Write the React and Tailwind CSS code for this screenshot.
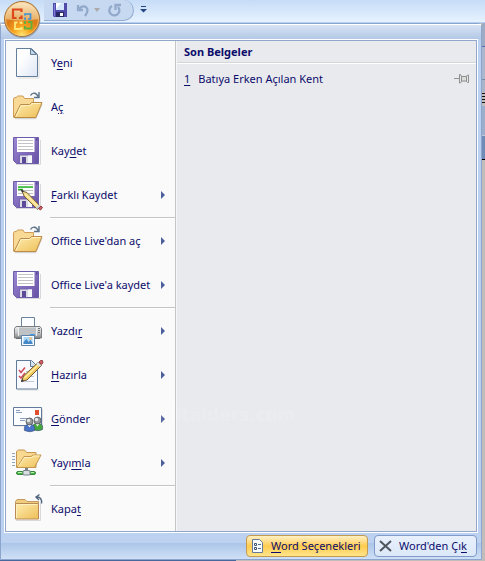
import React from "react";

function Folder({ mode }) {
  return (
    <svg width="32" height="32" viewBox="0 0 32 32" fill="none">
      <defs>
        <linearGradient id="fy" x1="0" y1="0" x2="1" y2="1">
          <stop offset="0" stopColor="#ffedb0" />
          <stop offset="1" stopColor="#edbf58" />
        </linearGradient>
      </defs>
      {mode === "closed" ? (
        <>
          <path d="M4 27.500h24.500V10" stroke="#d9d9dc" />
          <path d="M3.500 25.500V8.500l1.500-2h8l2 2h11.500v17z" fill="#f0cd7c" stroke="#c29a62" />
          <path d="M3.500 26V10.500h23V26z" fill="url(#fy)" stroke="#b98a56" />
          <path d="M4.500 25V11.500h21" stroke="#fff0c0" />
          <path d="M29.500 10.500c.5-4-1-6.500-4.500-6.500M27.500 1.500L24 4l3 3" stroke="#52657f" strokeWidth="1.400" />
        </>
      ) : (
        <>
          <path d="M3 27.500h20.500L30 13" stroke="#d5d5d8" strokeWidth="1.500" />
          <path d="M1.500 26V8l1-1.500h2l1-1.500h5.500l1.500 2.500h9v6L22 26z" fill="#f8d996" stroke="#cf9d56" />
          <path d="M2 26.500L8.500 13.500l9 0 2-2H30L24 26.500z" fill="url(#fy)" stroke="#bd8b45" />
          <path d="M4 25.500L9.200 14.500H18l2-2h8.500" stroke="#fff1c2" />
          <path d="M18.500 4.500c2-3.500 6-3 7.500 1M27 1v5.500h-5" stroke="#5a7287" strokeWidth="1.400" />
        </>
      )}
    </svg>
  );
}

function Pencil() {
  return (
    <g>
      <path d="M10 12l2 5L25.500 30.500l3-3L15 13.500z" fill="#f3d586" stroke="#74613c" />
      <path d="M13 15L27 28.500" stroke="#fff0a9" strokeWidth="1.500" />
      <path d="M24.500 29.500l3.500-3.500" stroke="#c5ccd2" strokeWidth="2" />
      <path d="M26.500 29.500l2.500-2.500 1.500 1.500-2 2.500z" fill="#ce5a5d" stroke="#923f45" />
      <path d="M8.500 10l1.500 3.500 2-1.500z" fill="#333" />
    </g>
  );
}

function Disk({ edit }) {
  return (
    <svg width="32" height="32" viewBox="0 0 32 32" fill="none">
      <defs>
        <linearGradient id="dp" x2="1" y2="1">
          <stop stopColor="#9d89d4" />
          <stop offset="1" stopColor="#6550a4" />
        </linearGradient>
      </defs>
      <path d="M4 29.500h24.500V5" stroke="#d8d7dc" />
      <path d="M1.500 2.500h25v26H4.500l-3-3z" fill="url(#dp)" stroke="#6d5bab" />
      <path d="M5 3h17.500v14H5z" fill="#fff" />
      <path d="M6 5.500h15M6 8.500h15M6 11.500h15M6 14.500h15" stroke="#c3c3c6" />
      <path d="M7 19.500h15V28H7z" fill="#7763af" />
      <path d="M8 20.500h12V28H8z" fill="#d9dde3" />
      <path d="M10 22h4v6h-4z" fill="#5c4a99" />
      <path d="M16 20.500h4V28h-4z" fill="#f6f7fa" />
      <path d="M24 4.500h1.500" stroke="#55428e" strokeWidth="2" />
      {edit && (
        <>
          <path d="M6 8h15M6 10.500h5" stroke="#28b928" strokeWidth="1.300" />
          <Pencil />
        </>
      )}
    </svg>
  );
}

function Page() {
  return (
    <svg width="32" height="32" viewBox="0 0 32 32" fill="none">
      <defs>
        <linearGradient id="pg" x2="1" y2="1">
          <stop offset=".3" stopColor="#fff" />
          <stop offset="1" stopColor="#dce5f5" />
        </linearGradient>
      </defs>
      <path d="M6 31h21V9" stroke="#dedee0" />
      <path d="M4.500 1.500h15l6 6v22h-21z" fill="url(#pg)" stroke="#637f9b" />
      <path d="M18.500 1.500v6h6z" fill="#c2d7e5" stroke="#637f9b" />
    </svg>
  );
}

function Printer() {
  return (
    <svg width="32" height="32" viewBox="0 0 32 32" fill="none">
      <defs>
        <linearGradient id="pr" x2="0" y2="1">
          <stop stopColor="#ededed" />
          <stop offset=".5" stopColor="#c9cacb" />
          <stop offset="1" stopColor="#85898c" />
        </linearGradient>
      </defs>
      <path d="M9.500 12V2.500h13V12" fill="#fcfdff" stroke="#6c839c" />
      <path d="M4 11.500h24l1.500 2v9.500h-27v-9.500z" fill="url(#pr)" stroke="#7b7f83" />
      <path d="M7 12.500v7.500h17v-7.500z" fill="#bfc2c4" />
      <path d="M6.500 12v9M24.500 12v9" stroke="#eeeeef" />
      <path d="M4 23.500h24" stroke="#686d71" />
      <path d="M9.500 20.500h13v10h-13z" fill="#f8fbff" stroke="#5c82a9" />
      <path d="M11.500 22h9v7h-9z" fill="#a9d6f5" />
      <path d="M11.500 29v-2l3-3 2 3 2-2 2 3v1z" fill="#4487c5" />
      <circle cx="18.500" cy="23.500" r="1.200" fill="#ffbd73" />
      <path d="M26 13.500h2M26 15.500h2M26 17.500h2" stroke="#6f7377" />
      <path d="M18 19.500h5" stroke="#4299e5" />
    </svg>
  );
}

function Prepare() {
  return (
    <svg width="32" height="32" viewBox="0 0 32 32" fill="none">
      <path d="M6 31h20.500" stroke="#dedee0" />
      <path d="M4.500 1.500h15l6 6v22.500h-21z" fill="#f8faff" stroke="#607b99" />
      <path d="M18.500 1.500v6h6" fill="#d3e0ed" stroke="#607b99" />
      <path d="M14 12.500h8M13 17.500h9M9 22.500h13" stroke="#c2cad6" />
      <path d="M7 11l2 2.500 4-5M7 17l2 2 4-5" stroke="#d24e5d" strokeWidth="1.600" />
      <path d="M9.500 22.500l2-5.500L26 3.500l3.500 3-14.500 14.500z" fill="#f0c65f" stroke="#705c3d" />
      <path d="M12.500 19L27 5" stroke="#fff0a2" strokeWidth="1.500" />
      <path d="M25 4l3.500 3" stroke="#dde4e8" strokeWidth="2" />
      <path d="M27 3l1.500-1.500h2l.5 2.500-1.500 1.500z" fill="#d55961" stroke="#93484d" />
      <path d="M9 23l1-3 2 2z" fill="#333" />
    </svg>
  );
}

function Person({ x, y, color }) {
  return (
    <g transform={`translate(${x} ${y})`}>
      <path d="M-5 12.500q-1-5 3-6h4q4 1 3 6-4 2.500-10 0z" fill={color} stroke="#435977" strokeWidth=".7" />
      <path d="M-2 6.500l2 3 2-3" fill="#fff" />
      <circle cx="0" cy="3.500" r="3.500" fill="#929899" stroke="#4d5356" strokeWidth=".8" />
      <circle cx="-1" cy="2.500" r="1.700" fill="#e6e8e8" />
    </g>
  );
}

function Send() {
  return (
    <svg width="32" height="32" viewBox="0 0 32 32" fill="none">
      <path d="M2 23h28.500V6" stroke="#ddd" />
      <path d="M1.500 4.500h28v18h-28z" fill="#fbfdff" stroke="#62799b" />
      <path d="M4 7.500h4M4 9.500h6M8 15.500h8M8 17.500h5" stroke="#8b9dbc" />
      <path d="M23 7h4v5h-4z" fill="#e04f2e" />
      <Person x={25.5} y={14} color="#45a83b" />
      <Person x={17.5} y={15} color="#4773cb" />
    </svg>
  );
}

function Publish() {
  return (
    <svg width="32" height="32" viewBox="0 0 32 32" fill="none">
      <path d="M0 6.500h3M0 9.500h3M0 12.500h3M0 15.500h3M0 18.500h3" stroke="#91a5bd" />
      <path d="M4.500 20.500V4.500l2-1.500h6l2 2.500H24v15z" fill="#f9d88f" stroke="#c5964f" />
      <path d="M5 20.500l7-11 7 0 2-1.500h8l-6.500 12.500z" fill="url(#fy)" stroke="#c5964f" />
      <path d="M6.500 19.500l6-9h7l2-1.500h6" stroke="#fff0bd" />
      <path d="M14.500 21v4" stroke="#77848b" strokeWidth="3" />
      <rect x="4.500" y="24.500" width="19" height="3" rx="1.500" fill="#46b942" stroke="#39883e" />
      <path d="M6 25.500h4M19 25.500h3" stroke="#b9efab" />
      <rect x="11" y="23.500" width="7" height="4.500" rx="1" fill="#d8dddf" stroke="#77848b" />
    </svg>
  );
}

function Items({ items }) {
  return items.map(({ icon, before = "", hot = "", after = "", arrow }) => (
    <button key={before + hot + after} className="flex h-11 w-full items-center pl-1.5 pr-2 text-left">
      <span className="mr-[7px] w-8 shrink-0">{icon}</span>
      <span className="flex-1 whitespace-nowrap">
        {before}
        <u className="underline-offset-2">{hot}</u>
        {after}
      </span>
      {arrow && (
        <svg width="6" height="8" viewBox="0 0 6 8" className="shrink-0">
          <path d="M0 0l4 4-4 4z" fill="#4b5f9b" />
        </svg>
      )}
    </button>
  ));
}

function Separator() {
  return <div className="ml-11 h-0.5 border-t border-[#c5c5c5] bg-white" />;
}

function OfficeButton() {
  return (
    <button aria-label="Office" className="absolute left-[3px] top-0 z-10">
      <svg width="38" height="39" viewBox="0 0 38 39" fill="none">
        <defs>
          <radialGradient id="orb" cx=".5" cy=".95" r=".95">
            <stop stopColor="#ffe36a" />
            <stop offset=".25" stopColor="#f9a51f" />
            <stop offset=".55" stopColor="#dc7a17" />
            <stop offset="1" stopColor="#edb069" />
          </radialGradient>
          <linearGradient id="orbTop" x2="0" y2="1">
            <stop stopColor="#fdf0d2" />
            <stop offset="1" stopColor="#e8b670" />
          </linearGradient>
        </defs>
        <circle cx="19.500" cy="20" r="18" fill="#73839b" opacity=".5" />
        <circle cx="19" cy="19" r="17.500" fill="url(#orb)" stroke="#a3733f" />
        <path d="M2.500 19a16.500 16.500 0 0 1 33 0q-16.500 3-33 0z" fill="url(#orbTop)" opacity=".85" />
        <circle cx="19" cy="19" r="16.500" stroke="#ffe19c" opacity=".5" />
        <path d="M13.500 18H10V9.500h8.500V12M18.500 15.500V18H16" stroke="#dc4a1c" strokeWidth="2.200" />
        <path d="M22 15.500v-1.500h5.500v5H25M22 17.500v1.500h1" stroke="#3a90d8" strokeWidth="1.700" />
        <path d="M14.500 22.500h-2.500v6.500h6.500v-2M18.500 24v-1.500h-2" stroke="#ffe87a" strokeWidth="1.800" />
        <path d="M25 22h3.500v6.500H22V26M22 24v-2h1" stroke="#66ae3c" strokeWidth="1.900" />
      </svg>
    </button>
  );
}

function QuickAccess() {
  return (
    <header className="flex h-[23px] border-b border-[#b2d1f4] bg-linear-to-b from-[#c6dcf7] to-[#e7f2fe] pl-11">
      <div className="flex h-[21px] w-[90px] items-center rounded-r-full border-b border-r border-[#93add2] bg-[#c7d9f0] pl-2">
        <button aria-label="Kaydet" className="mr-2">
          <svg width="16" height="16" viewBox="0 0 16 16">
            <path d="M1 1h14v14H2l-1-1z" fill="#504ba8" />
            <path d="M4 1h8v7H4z" fill="#d4e6fb" />
            <path d="M4 1h5L4 7z" fill="#fff" />
            <path d="M4 10h8v5H4z" fill="#292966" />
            <path d="M8 11h3v3H8z" fill="#fff" />
            <path d="M2 2h1v12H2z" fill="#7f7edb" />
          </svg>
        </button>
        <button aria-label="Geri al" className="mr-1">
          <svg width="14" height="14" viewBox="0 0 14 14" fill="none">
            <path d="M2 2v5h5M3 6c5-6 12-1 6 7" stroke="#93a9cb" strokeWidth="2.300" />
          </svg>
        </button>
        <button aria-label="Geri al seçenekleri" className="mr-2">
          <svg width="6" height="4" viewBox="0 0 6 4">
            <path d="M0 0h6L3 4z" fill="#aaa9aa" />
          </svg>
        </button>
        <button aria-label="Yinele">
          <svg width="14" height="14" viewBox="0 0 14 14" fill="none">
            <path d="M4 3a5 5 0 1 0 6 1M7.500 7V2H13" stroke="#93a9cb" strokeWidth="2.300" />
          </svg>
        </button>
      </div>
      <button aria-label="Hızlı erişimi özelleştir" className="mb-1 ml-1.5 flex items-center">
        <svg width="7" height="8" viewBox="0 0 7 8">
          <path d="M1 1h5v1H1zM0 4h7L3.500 7.500z" fill="#234583" />
        </svg>
      </button>
    </header>
  );
}

function RibbonEdge() {
  return (
    <div aria-hidden="true" className="flex w-[3px] shrink-0 flex-col bg-[#c2bdbb]">
      <div className="h-[23px] bg-[#9dabc5]" />
      <div className="h-[33px] border-t border-[#536caa] bg-[#aab7cd]" />
      <div className="h-[13px] border-t border-[#7689aa] bg-[#a8b4c8]" />
      <svg width="3" height="14" className="block shrink-0">
        <path d="M0 1.500h3M0 4.500h3M0 7.500h3M0 10.500h3" stroke="#111" />
      </svg>
      <div className="h-[29px] bg-[#9baecc]" />
      <div className="h-[24px] border-t border-[#bdc8d9] bg-[#6f8cb7]" />
      <div className="h-px bg-black" />
    </div>
  );
}

export default function App() {
  return (
    <main className="relative bg-[#c2bdbb] font-['Noto_Sans','Liberation_Sans',sans-serif] text-[11px] leading-4 text-[#0c0c6b]">
      <OfficeButton />
      <QuickAccess />
      <div className="flex">
        <section className="min-w-0 flex-1 rounded-t-sm border border-[#8ca5cf] bg-[#bcd1ef]">
          <div className="h-[15px] border-t border-white bg-linear-to-b from-[#d7e3f4] to-[#b2c8e6]" />
          <div className="mx-[3px] border border-white">
            <div className="relative flex border border-[#90a7cb] bg-[#e9eaee]">
              <nav className="w-[170px] shrink-0 border-r border-[#c5c5c5] bg-[#fafafa]">
                <Items
                  items={[
                    { icon: <Page />, before: "Y", hot: "e", after: "ni" },
                    { icon: <Folder />, before: "A", hot: "ç" },
                    { icon: <Disk />, before: "Kay", hot: "d", after: "et" },
                    { icon: <Disk edit />, hot: "F", after: "arklı Kaydet", arrow: true },
                  ]}
                />
                <Separator />
                <Items
                  items={[
                    { icon: <Folder />, before: "Office Live'dan aç", arrow: true },
                    { icon: <Disk />, before: "Office Live'a kaydet", arrow: true },
                  ]}
                />
                <Separator />
                <Items
                  items={[
                    { icon: <Printer />, before: "Yazdı", hot: "r", arrow: true },
                    { icon: <Prepare />, hot: "H", after: "azırla", arrow: true },
                    { icon: <Send />, hot: "G", after: "önder", arrow: true },
                    { icon: <Publish />, before: "Yayı", hot: "m", after: "la", arrow: true },
                  ]}
                />
                <Separator />
                <Items items={[{ icon: <Folder mode="closed" />, before: "Kapa", hot: "t" }]} />
              </nav>
              <div className="min-w-0 flex-1 border-l border-[#f6f6f8]">
                <h2 className="h-[22px] border-b border-[#d5d6d7] pl-[7px] pt-[3px] font-bold">Son Belgeler</h2>
                <div className="flex items-center border-t border-white py-[7px] pl-[7px] pr-1.5">
                  <a href="#belge" className="flex flex-1 gap-2">
                    <u className="underline-offset-2">1</u>
                    <span>Batıya Erken Açılan Kent</span>
                  </a>
                  <button aria-label="Sabitle">
                    <svg width="16" height="10" viewBox="0 0 16 10" fill="none">
                      <path d="M0 4.500h5" stroke="#969696" />
                      <path d="M7 2.500h6v5H7z" fill="#dcdcdc" />
                      <path d="M7 2.500h6M7 7h6" stroke="#8e8e8e" />
                      <path d="M5.500.5h1l1 2v5l-1 1.500h-1zM14.500 1h-1l-1 1.500v5l1 1h1z" fill="#e9e9e9" stroke="#8e8e8e" />
                    </svg>
                  </button>
                </div>
              </div>
              <span className="pointer-events-none absolute left-[146px] top-[362px] font-['DejaVu_Sans'] text-[17px] font-bold leading-6 text-white/10">
                dijitalders.com
              </span>
            </div>
          </div>
          <footer className="flex h-[26px] items-center justify-end gap-1.5 bg-linear-to-b from-[#bdd2f0] from-40% via-[#acc6e9] via-40% to-[#cfe0f6] pr-1">
            <button className="flex h-[22px] w-[122px] items-center gap-[7px] rounded-sm border border-[#c39b50] bg-linear-to-b from-[#fff0c2] via-[#ffcb4b] to-[#ffe58b] pl-1">
              <svg width="13" height="14" viewBox="0 0 13 14" fill="none">
                <path d="M1.500.5h7l3 3v10h-10z" fill="#f9fcff" stroke="#637b99" />
                <path d="M3.500 4.500h2v2h-2zM3.500 8.500h2v2h-2z" stroke="#40536e" />
                <path d="M7 5.500h3M7 9.500h3" stroke="#536d8d" />
              </svg>
              <span><u className="underline-offset-2">W</u>ord Seçenekleri</span>
            </button>
            <button className="flex h-[22px] w-[103px] items-center gap-[7px] rounded-sm border border-[#809bc9] bg-linear-to-b from-[#e8f0fc] to-[#dce8f8] pl-1">
              <svg width="13" height="12" viewBox="0 0 13 12">
                <path d="M1 1l11 10M12 1L1 11" stroke="#50555d" strokeWidth="2" />
              </svg>
              <span>Word'den Çı<u className="underline-offset-2">k</u></span>
            </button>
          </footer>
        </section>
        <RibbonEdge />
      </div>
      <div aria-hidden="true" className="h-px w-[236px] bg-[#46689c]" />
    </main>
  );
}
